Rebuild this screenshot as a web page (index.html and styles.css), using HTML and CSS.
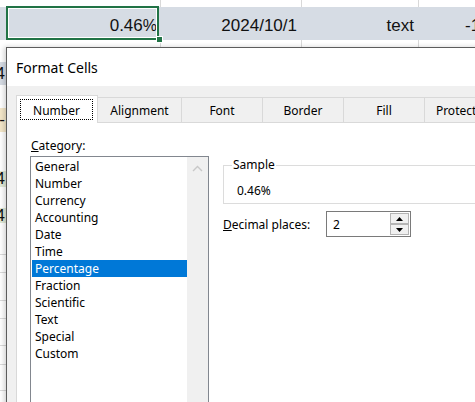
FILE: index.html
```html
<!DOCTYPE html>
<html>
<head>
<meta charset="utf-8">
<title>Format Cells</title>
<link rel="stylesheet" href="styles.css">
</head>
<body>
<div class="sheet">
  <div class="cols gap"><div class="c c1"></div><div class="c c2"></div><div class="c c3"></div><div class="c c4"></div></div>
  <div class="cols band">
    <div class="c c1">0.46<span class="pct">%</span></div>
    <div class="c c2">2024/10/1</div>
    <div class="c c3">text</div>
    <div class="c c4">-1</div>
  </div>
  <div class="cols gap"><div class="c c1"></div><div class="c c2"></div><div class="c c3"></div><div class="c c4"></div></div>
  <div class="behind">
    <div class="r"></div>
    <div class="r blue"><span class="t">14</span></div>
    <div class="r"></div>
    <div class="r tan"><span class="t">-</span></div>
    <div class="r"></div>
    <div class="r green"><span class="t">14</span></div>
    <div class="r"></div>
    <div class="r green"><span class="t">14</span></div>
    <div class="r gl"></div>
    <div class="r gl"></div>
    <div class="r gl"></div>
    <div class="r gl"></div>
    <div class="r gl"></div>
    <div class="r gl"></div>
    <div class="r gl"></div>
    <div class="r"></div>
  </div>
</div>
<div class="selection"><span class="handle"></span></div>

<div class="dialog">
  <div class="titlebar">Format Cells</div>
  <div class="dbody">
    <div class="tabs">
      <div class="tab active"><span class="focus">Number</span></div>
      <div class="tab wide">Alignment</div>
      <div class="tab">Font</div>
      <div class="tab">Border</div>
      <div class="tab">Fill</div>
      <div class="tab">Protection</div>
    </div>
    <div class="panel">
      <div class="leftcol">
        <div class="cat-label"><u>C</u>ategory:</div>
        <div class="listbox">
          <div class="items">
            <div class="item">General</div>
            <div class="item">Number</div>
            <div class="item">Currency</div>
            <div class="item">Accounting</div>
            <div class="item">Date</div>
            <div class="item">Time</div>
            <div class="item on">Percentage</div>
            <div class="item">Fraction</div>
            <div class="item">Scientific</div>
            <div class="item">Text</div>
            <div class="item">Special</div>
            <div class="item">Custom</div>
          </div>
          <div class="scroll">
            <svg class="chev" width="11" height="7" viewBox="0 0 11 7"><polyline points="1,6 5.5,1.5 10,6" fill="none" stroke="#c8c8c8" stroke-width="1.4"/></svg>
          </div>
        </div>
      </div>
      <div class="rightcol">
        <fieldset class="sample">
          <legend>Sample</legend>
          <div class="sample-val">0.46%</div>
        </fieldset>
        <div class="decrow">
          <div class="dec-label"><u>D</u>ecimal places:</div>
          <div class="spinbox">
            <span class="val">2</span>
            <div class="spin">
              <div class="sbtn"><svg width="7" height="4" viewBox="0 0 7 4"><polygon points="0,4 3.5,0 7,4" fill="#000"/></svg></div>
              <div class="sbtn"><svg width="7" height="4" viewBox="0 0 7 4"><polygon points="0,0 3.5,4 7,0" fill="#000"/></svg></div>
            </div>
          </div>
        </div>
      </div>
    </div>
  </div>
</div>
</body>
</html>
```
FILE: styles.css
```css
html, body {
  margin: 0;
  padding: 0;
  width: 475px;
  height: 402px;
  overflow: hidden;
  background: #fff;
}
body {
  position: relative;
  font-family: "Noto Sans", "Open Sans", sans-serif;
  color: #000;
}

/* ---------- spreadsheet behind ---------- */
.sheet {
  font-family: "Liberation Sans", Arial, sans-serif;
  font-size: 17px;
  color: #111;
}
.cols {
  display: flex;
  width: 520px;
}
.cols.gap { height: 7px; }
.c {
  box-sizing: border-box;
  flex: none;
  border-right: 1px solid #d9d9d9;
}
.c1 { width: 161px; }
.c2 { width: 141px; }
.c3 { width: 117px; }
.c4 { flex: 1 1 auto; border-right: none; }

.band {
  height: 33px;
  background: #d6dce4;
}
.band .c {
  border-right-color: transparent;
  display: flex;
  align-items: center;
  justify-content: flex-end;
  padding: 4px 4px 0 0;
  white-space: nowrap;
}
.band .c4 {
  justify-content: flex-start;
  padding-left: 46px;
}
.pct {
  letter-spacing: -1px;
  font-size: 16px;
}

.behind {
  display: grid;
  grid-template-rows: 15px 23px 23px 24px 39px 16px 21px 15px 32px 18px 28px 18px 27px 19px 26px 11px;
}
.r {
  box-sizing: border-box;
  display: flex;
  align-items: center;
}
.r.blue { background: #d6dce4; }
.r.tan { background: #f4e7c9; }
.r.green { background: #e0e9d6; }
.r.gl { border-bottom: 1px solid #dadada; }
.t {
  width: 5px;
  display: flex;
  justify-content: flex-end;
  overflow: hidden;
  white-space: nowrap;
}

.selection {
  position: absolute;
  left: 6px;
  top: 6px;
  width: 153px;
  height: 34px;
  box-sizing: border-box;
  border: 2px solid #217346;
  box-shadow: inset 0 0 0 1px #fff;
}
.handle {
  position: absolute;
  right: -6px;
  bottom: -5px;
  width: 5px;
  height: 5px;
  background: #217346;
  border: 1px solid #fff;
}

/* ---------- dialog ---------- */
.dialog {
  position: absolute;
  left: 6px;
  top: 47px;
  width: 520px;
  height: 380px;
  background: #f0f0f0;
  border-top: 1px solid #5c5c5c;
  border-left: 1px solid #5c5c5c;
  box-shadow: -2px 0 5px rgba(0, 0, 0, 0.18);
  font-size: 12px;
}
.titlebar {
  height: 38px;
  background: #fff;
  display: flex;
  align-items: center;
  padding-left: 9px;
  font-size: 14px;
  color: #000;
}
.dbody {
  padding: 9px 0 0 9px;
}
.tabs {
  display: flex;
  align-items: flex-end;
  position: relative;
  z-index: 1;
}
.tab {
  box-sizing: border-box;
  flex: none;
  width: 81px;
  height: 25px;
  border-top: 1px solid #d9d9d9;
  border-right: 1px solid #d9d9d9;
  display: flex;
  align-items: center;
  justify-content: center;
  padding-top: 1px;
  white-space: nowrap;
}
.tab.wide { width: 84px; }
.tab.active {
  width: 82px;
  height: 28px;
  margin-bottom: -1px;
  background: #fff;
  border-left: 1px solid #d9d9d9;
  align-items: stretch;
  padding: 3px 4px 3px 3px;
}
.focus {
  flex: 1;
  border: 1px dotted #000;
  display: flex;
  align-items: center;
  justify-content: center;
  padding-top: 1px;
}

.panel {
  background: #fff;
  border-top: 1px solid #d9d9d9;
  border-left: 1px solid #d9d9d9;
  height: 300px;
  box-sizing: border-box;
  padding: 14px 0 0 13px;
  display: flex;
  align-items: flex-start;
  gap: 14px;
}
.cat-label {
  line-height: 16px;
  padding-top: 1px;
  padding-left: 1px;
  margin-bottom: 2px;
}
.listbox {
  box-sizing: border-box;
  width: 179px;
  height: 260px;
  border: 1px solid #82878f;
  display: flex;
}
.items {
  flex: 1;
  padding-top: 1px;
}
.item {
  box-sizing: border-box;
  height: 17px;
  line-height: 16px;
  padding-top: 1px;
  margin-left: 1px;
  padding-left: 3px;
  white-space: nowrap;
}
.item.on {
  background: #0078d7;
  color: #fff;
}
.scroll {
  width: 21px;
  background: #f0f0f0;
  display: flex;
  justify-content: center;
  align-items: flex-start;
  padding-top: 8px;
  box-sizing: border-box;
}

.rightcol {
  padding-top: 20px;
}
.sample {
  margin: 0;
  width: 300px;
  box-sizing: border-box;
  border: 1px solid #dcdcdc;
  padding: 0 0 4px 13px;
}
.sample legend {
  margin-left: -5px;
  padding: 0 1px;
  line-height: 16px;
}
.sample-val {
  line-height: 16px;
  padding-top: 10px;
}
.decrow {
  display: flex;
  align-items: center;
  margin-top: 7px;
}
.dec-label {
  width: 103px;
}
.spinbox {
  box-sizing: border-box;
  width: 85px;
  height: 26px;
  border: 1px solid #7a7a7a;
  background: #fff;
  display: flex;
  align-items: center;
}
.val {
  padding-left: 6px;
  flex: 1;
}
.spin {
  display: flex;
  flex-direction: column;
  margin-right: 1px;
  align-self: stretch;
  padding: 1px 0;
}
.sbtn {
  box-sizing: border-box;
  width: 19px;
  height: 11px;
  border: 1px solid #b4b4b4;
  background: #f0f0f0;
  display: flex;
  align-items: center;
  justify-content: center;
}
```
